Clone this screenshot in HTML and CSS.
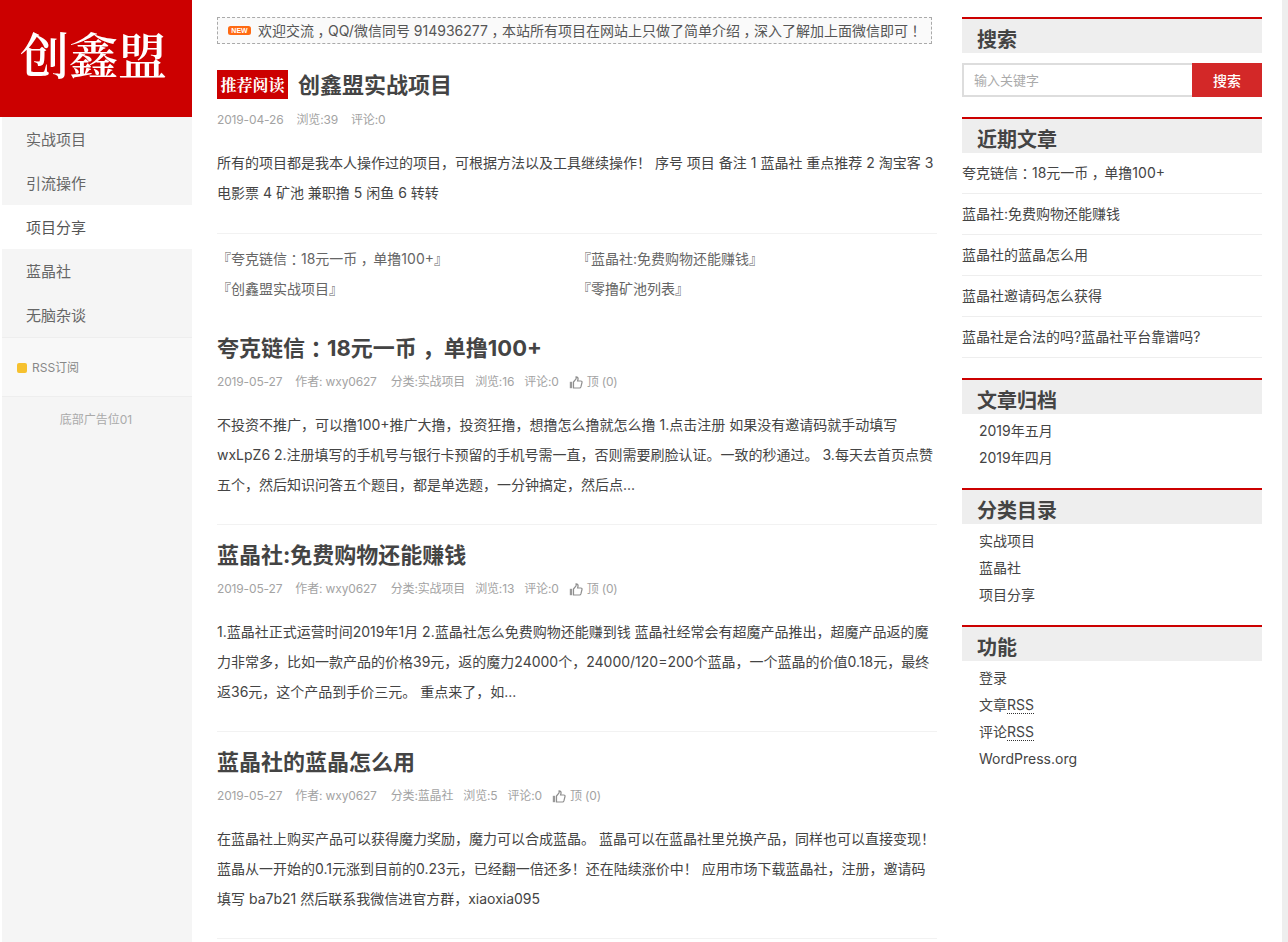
FILE: index.html
```html
<!DOCTYPE html>
<html lang="zh-CN">
<head>
<meta charset="utf-8">
<title>创鑫盟</title>
<link rel="stylesheet" href="styles.css">
</head>
<body>
<div class="page">
  <aside class="nav">
    <h1 class="logo">创鑫盟</h1>
    <ul class="menu">
      <li>实战项目</li>
      <li>引流操作</li>
      <li class="active">项目分享</li>
      <li>蓝晶社</li>
      <li>无脑杂谈</li>
    </ul>
    <div class="rss"><i class="rss-dot"></i>RSS订阅</div>
    <div class="ad">底部广告位01</div>
  </aside>

  <main class="main">
    <div class="notice">
      <svg class="new" width="23" height="9" viewBox="0 0 23 9"><rect width="23" height="9" rx="2.5" fill="#ff6a13"/><text x="11.5" y="7.2" text-anchor="middle" class="new-text">NEW</text></svg>
      <span>欢迎交流<span class="cm">，</span>QQ/微信同号 914936277<span class="cm">，</span>本站所有项目在网站上只做了简单介绍<span class="cm">，</span>深入了解加上面微信即可<span class="cm">！</span></span>
    </div>

    <article class="post first">
      <h2 class="title"><span class="tag">推荐阅读</span>创鑫盟实战项目</h2>
      <div class="meta"><span>2019-04-26</span><span>浏览:39</span><span>评论:0</span></div>
      <p class="text">所有的项目都是我本人操作过的项目，可根据方法以及工具继续操作！ 序号 项目 备注 1 蓝晶社 重点推荐 2 淘宝客 3 电影票 4 矿池 兼职撸 5 闲鱼 6 转转</p>
    </article>

    <div class="links">
      <span>『夸克链信<span class="cm">：</span>18元一币<span class="cm wide">，</span>单撸100+』</span>
      <span>『蓝晶社:免费购物还能赚钱』</span>
      <span>『创鑫盟实战项目』</span>
      <span>『零撸矿池列表』</span>
    </div>

    <article class="post">
      <h2 class="title">夸克链信<span class="cm">：</span>18元一币<span class="cm wide">，</span>单撸100+</h2>
      <div class="meta"><span class="date">2019-05-27</span><span class="author">作者: wxy0627</span><span class="tight">分类:实战项目</span><span class="tight">浏览:16</span><span class="tight">评论:0</span><span class="like"><svg class="thumb" width="14" height="13" viewBox="0 0 14 13"><path class="thumb-bar" d="M.8 5.800h2.400v6.400H.8z"/><path class="thumb-hand" d="M4.500 6l2.600-3.200V.8c1.400 0 2 1 2 2.200L8.600 5h3.200c.9 0 1.400.7 1.200 1.500l-1.100 4.400c-.2.700-.7 1.100-1.400 1.100H4.500z"/></svg>顶 (0)</span></div>
      <p class="text">不投资不推广，可以撸100+推广大撸，投资狂撸，想撸怎么撸就怎么撸 1.点击注册 如果没有邀请码就手动填写 wxLpZ6 2.注册填写的手机号与银行卡预留的手机号需一直，否则需要刷脸认证。一致的秒通过。 3.每天去首页点赞五个，然后知识问答五个题目，都是单选题，一分钟搞定，然后点...</p>
    </article>

    <article class="post">
      <h2 class="title">蓝晶社:免费购物还能赚钱</h2>
      <div class="meta"><span class="date">2019-05-27</span><span class="author">作者: wxy0627</span><span class="tight">分类:实战项目</span><span class="tight">浏览:13</span><span class="tight">评论:0</span><span class="like"><svg class="thumb" width="14" height="13" viewBox="0 0 14 13"><path class="thumb-bar" d="M.8 5.800h2.400v6.400H.8z"/><path class="thumb-hand" d="M4.500 6l2.600-3.200V.8c1.400 0 2 1 2 2.200L8.600 5h3.200c.9 0 1.400.7 1.200 1.500l-1.100 4.400c-.2.700-.7 1.100-1.400 1.100H4.500z"/></svg>顶 (0)</span></div>
      <p class="text">1.蓝晶社正式运营时间2019年1月 2.蓝晶社怎么免费购物还能赚到钱 蓝晶社经常会有超魔产品推出，超魔产品返的魔力非常多，比如一款产品的价格39元，返的魔力24000个，24000/120=200个蓝晶，一个蓝晶的价值0.18元，最终返36元，这个产品到手价三元。 重点来了，如...</p>
    </article>

    <article class="post">
      <h2 class="title">蓝晶社的蓝晶怎么用</h2>
      <div class="meta"><span class="date">2019-05-27</span><span class="author">作者: wxy0627</span><span class="tight">分类:蓝晶社</span><span class="tight">浏览:5</span><span class="tight">评论:0</span><span class="like"><svg class="thumb" width="14" height="13" viewBox="0 0 14 13"><path class="thumb-bar" d="M.8 5.800h2.400v6.400H.8z"/><path class="thumb-hand" d="M4.500 6l2.600-3.200V.8c1.400 0 2 1 2 2.200L8.600 5h3.200c.9 0 1.400.7 1.200 1.500l-1.100 4.400c-.2.700-.7 1.100-1.400 1.100H4.500z"/></svg>顶 (0)</span></div>
      <p class="text">在蓝晶社上购买产品可以获得魔力奖励，魔力可以合成蓝晶。 蓝晶可以在蓝晶社里兑换产品，同样也可以直接变现！蓝晶从一开始的0.1元涨到目前的0.23元，已经翻一倍还多！还在陆续涨价中！ 应用市场下载蓝晶社，注册，邀请码填写 ba7b21 然后联系我微信进官方群，xiaoxia095</p>
    </article>
  </main>

  <aside class="side">
    <section class="widget">
      <h3 class="widget-title">搜索</h3>
      <form class="search">
        <input class="search-input" type="text" placeholder="输入关键字">
        <button class="search-btn" type="button">搜索</button>
      </form>
    </section>
    <section class="widget">
      <h3 class="widget-title">近期文章</h3>
      <ul class="recent">
        <li>夸克链信<span class="cm">：</span>18元一币<span class="cm wide">，</span>单撸100+</li>
        <li>蓝晶社:免费购物还能赚钱</li>
        <li>蓝晶社的蓝晶怎么用</li>
        <li>蓝晶社邀请码怎么获得</li>
        <li>蓝晶社是合法的吗?蓝晶社平台靠谱吗?</li>
      </ul>
    </section>
    <section class="widget compact">
      <h3 class="widget-title">文章归档</h3>
      <ul class="plain"><li>2019年五月</li><li>2019年四月</li></ul>
    </section>
    <section class="widget compact">
      <h3 class="widget-title">分类目录</h3>
      <ul class="plain"><li>实战项目</li><li>蓝晶社</li><li>项目分享</li></ul>
    </section>
    <section class="widget compact">
      <h3 class="widget-title">功能</h3>
      <ul class="plain">
        <li>登录</li>
        <li>文章<abbr class="abbr">RSS</abbr></li>
        <li>评论<abbr class="abbr">RSS</abbr></li>
        <li>WordPress.org</li>
      </ul>
    </section>
  </aside>
  <div class="edge"></div>
</div>
</body>
</html>
```
FILE: styles.css
```css
* { box-sizing: border-box; }
html, body { margin: 0; padding: 0; height: 942px; overflow: hidden; background: #fff; }
body { font: 14px/30px Inter, "Noto Sans CJK SC", sans-serif; color: #444; }
ul { list-style: none; margin: 0; padding: 0; }
h1, h2, h3, p { margin: 0; }

.page { display: grid; grid-template-columns: 190px 745px 325px 26px; height: 942px; padding-left: 2px; }

.nav { background: #f5f5f5; height: 942px; }
.logo { margin-left: -2px; padding-right: 5px; height: 117px; background: #cc0000; color: #fff; font: 600 49px/106px "Noto Serif CJK SC", "Noto Sans CJK SC", serif; text-align: center; }
.menu li { height: 44px; line-height: 45px; padding-left: 24px; font-size: 15px; color: #666; }
.menu li.active { background: #fff; color: #555; }
.rss { height: 60px; padding: 1px 0 0 15px; background: #f8f8f8; border-top: 1px solid #eee; border-bottom: 1px solid #eee; display: flex; align-items: center; font-size: 12px; color: #888; }
.rss-dot { width: 10px; height: 10px; border-radius: 2px; background: #f6c12f; margin-right: 5px; }
.ad { text-align: center; font-size: 12px; color: #aaa; line-height: 20px; padding-top: 13px; padding-right: 2px; }

.main { margin-left: 25px; width: 720px; padding-top: 17px; }
.notice { height: 27px; width: 715px; border: 1px dashed #aaa; background: #fafafa; display: flex; align-items: center; padding-left: 10px; font-size: 14px; color: #555; line-height: 25px; white-space: nowrap; }
.cm { font-feature-settings: "halt"; padding: 0 .25em; }
.cm.wide { padding-right: calc(.25em + 2px); }
.title .cm.wide { padding-right: calc(.25em + 5px); }
.new { margin-right: 7px; flex: none; }
.new-text { font: 700 7px "Liberation Sans", sans-serif; fill: #fff; }

.post { border-bottom: 1px solid #f2f2f2; padding-bottom: 24px; }
.post.first { margin-top: 25px; padding-bottom: 25px; }
.title { padding-top: 1px; font-size: 22px; font-weight: 700; line-height: 30px; color: #444; white-space: nowrap; }
.tag { display: inline-block; width: 71px; height: 29px; margin-right: 10px; background: #cc0000; color: #fff; font: 700 16px/29px "Noto Serif CJK SC", "Noto Sans CJK SC", serif; text-align: center; vertical-align: top; }
.meta { display: flex; align-items: center; margin-top: 9px; font-size: 12px; letter-spacing: -.15px; line-height: 20px; color: #a3a3a3; white-space: nowrap; }
.first .meta { margin-top: 10px; }
.meta span { margin-right: 13px; }
.meta .author { margin-right: 14px; }
.meta .tight { margin-right: 10px; }
.like { display: flex; align-items: center; }
.thumb { margin-right: 4px; }
.thumb-bar { fill: #999; }
.thumb-hand { fill: none; stroke: #8f8f8f; stroke-width: 1.2; }
.text { margin-top: 18px; line-height: 30px; font-size: 14px; color: #444; height: 90px; }
.first .text { height: 60px; }

.links { display: grid; grid-template-columns: 360px 360px; grid-auto-rows: 30px; padding-top: 10px; height: 98px; color: #666; font-size: 14px; line-height: 30px; }

.post + .post { padding-top: 14px; }

.side { margin-left: 25px; width: 300px; grid-column: 3; padding-top: 17px; }
.edge { background: #eee; width: 6px; justify-self: end; height: 942px; }
.widget { margin-bottom: 20px; }
.widget.compact { margin-bottom: 17px; }
.widget-title { height: 36px; border-top: 2px solid #cc0000; background: #eee; padding-left: 15px; font-size: 20px; font-weight: 700; line-height: 42px; color: #444; overflow: hidden; }
.search { display: flex; height: 34px; margin-top: 10px; }
.search-input { flex: 1; min-width: 0; height: 34px; border: 2px solid #ddd; border-right: 0; padding: 0 10px; font: 13px Inter, "Noto Sans CJK SC", sans-serif; color: #444; outline: 0; }
.search-input::placeholder { color: #aaa; }
.search-btn { width: 70px; border: 0; padding: 0 0 1px; background: #d32828; color: #fff; font: 500 14px Inter, "Noto Sans CJK SC", sans-serif; }
.recent li { height: 41px; line-height: 40px; border-bottom: 1px solid #eee; font-size: 14px; color: #444; }
.plain { padding: 3px 0 0 17px; font-size: 14px; color: #444; }
.plain li { line-height: 27px; }
.abbr { border-bottom: 1px dotted #333; }
```
